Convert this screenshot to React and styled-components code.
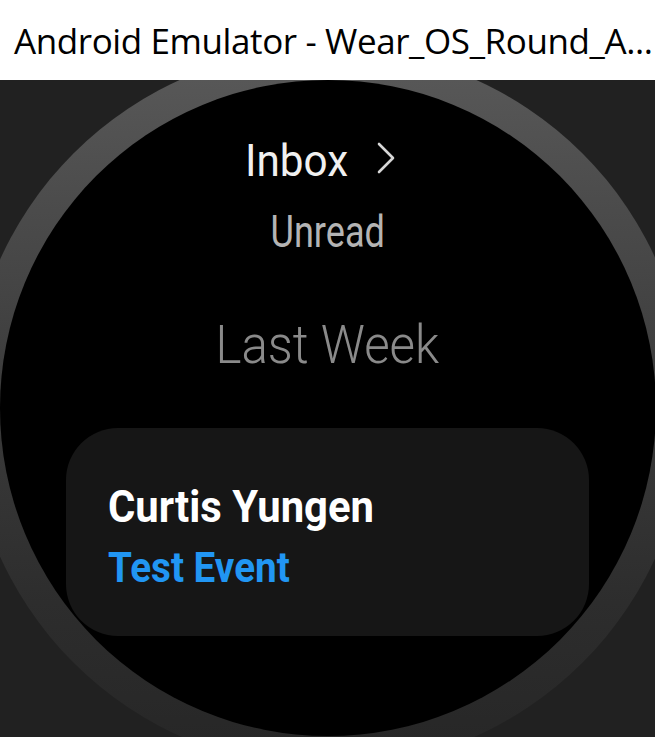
import styled, { createGlobalStyle } from "styled-components";

const GlobalStyle = createGlobalStyle`
  html, body {
    margin: 0;
    padding: 0;
    background: #212121;
  }
`;

const Window = styled.div`
  width: 655px;
  height: 737px;
  overflow: hidden;
  display: flex;
  flex-direction: column;
`;

const TitleBar = styled.div`
  height: 80px;
  flex-shrink: 0;
  background: #ffffff;
  display: flex;
  align-items: center;
  padding: 0 0 0 14px;
  box-sizing: border-box;
  font-family: "Open Sans", "Noto Sans", sans-serif;
  font-size: 35px;
  letter-spacing: -0.4px;
  color: #000000;
  white-space: nowrap;
  overflow: hidden;
`;

const Viewport = styled.div`
  flex: 1;
  background: #212121;
  display: flex;
  justify-content: center;
  overflow: hidden;
`;

const Bezel = styled.div`
  width: 720px;
  height: 720px;
  flex-shrink: 0;
  margin-top: -32px;
  padding: 32px;
  box-sizing: border-box;
  border-radius: 50%;
  background: linear-gradient(
    180deg,
    #5a5a5a 0%,
    #4c4c4c 21%,
    #3b3b3b 49%,
    #2d2d2d 77%,
    #262626 100%
  );
`;

const Screen = styled.div`
  width: 656px;
  height: 656px;
  border-radius: 50%;
  background: #000000;
  display: flex;
  flex-direction: column;
  align-items: center;
  padding-top: 55px;
  box-sizing: border-box;
  font-family: Roboto, "Liberation Sans", sans-serif;
`;

const Squeezed = styled.div`
  transform: scaleX(${(p) => p.$scale || 1});
  transform-origin: ${(p) => p.$origin || "center"};
`;

const HeaderRow = styled.div`
  display: flex;
  align-items: flex-start;
  gap: 17px;
  padding-right: 1px;
`;

const Title = styled(Squeezed)`
  margin: 0;
  font-size: 44px;
  line-height: 52px;
  font-weight: 400;
  color: #f0f0f0;
`;

const Subtitle = styled(Squeezed)`
  margin-top: 19px;
  font-size: 44px;
  line-height: 52px;
  font-weight: 400;
  color: #b4b4b4;
`;

const SectionLabel = styled(Squeezed)`
  margin-top: 56px;
  font-size: 53px;
  line-height: 62px;
  font-weight: 300;
  color: #8a8a8a;
`;

const Card = styled.div`
  margin-top: 52px;
  width: 523px;
  height: 208px;
  box-sizing: border-box;
  border-radius: 52px;
  background: #161616;
  padding: 53px 0 0 42px;
  display: flex;
  flex-direction: column;
  gap: 10px;
`;

const CardTitle = styled(Squeezed)`
  font-size: 44px;
  line-height: 52px;
  font-weight: 700;
  color: #ffffff;
`;

const CardBody = styled(Squeezed)`
  font-size: 42px;
  line-height: 50px;
  font-weight: 700;
  color: ${(p) => p.$color || "#2196f3"};
`;

const Chevron = () => (
  <svg width="40" height="52" viewBox="0 0 40 52">
    <polyline
      points="10,9 24,23 10,37"
      fill="none"
      stroke="#d6d6d6"
      strokeWidth="2.6"
      strokeLinecap="round"
      strokeLinejoin="round"
    />
  </svg>
);

export default function App() {
  return (
    <>
      <GlobalStyle />
      <Window>
        <TitleBar>Android Emulator - Wear_OS_Round_A...</TitleBar>
        <Viewport>
          <Bezel>
            <Screen>
              <HeaderRow>
                <Title as="h1" $scale={0.96} $origin="left">
                  Inbox
                </Title>
                <Chevron />
              </HeaderRow>
              <Subtitle $scale={0.82}>Unread</Subtitle>
              <SectionLabel $scale={0.93}>Last Week</SectionLabel>
              <Card>
                <CardTitle $scale={0.95} $origin="left">
                  Curtis Yungen
                </CardTitle>
                <CardBody $scale={0.92} $origin="left" $color="#2196f3">
                  Test Event
                </CardBody>
              </Card>
            </Screen>
          </Bezel>
        </Viewport>
      </Window>
    </>
  );
}
